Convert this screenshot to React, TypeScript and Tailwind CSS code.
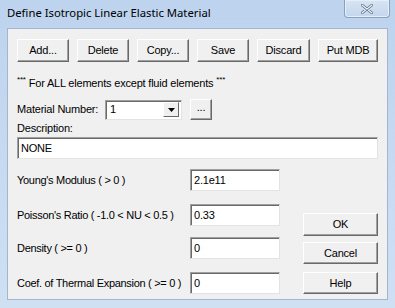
import React from "react";

const font = { fontFamily: '"Liberation Sans", Arial, sans-serif' };

function Btn({ label, w, h = 23, className = "" }: { label: string; w: number; h?: number; className?: string }) {
  return (
    <div
      className={`flex items-center justify-center bg-[#f0f0f0] border border-t-white border-l-white border-r-[#696969] border-b-[#696969] shadow-[inset_-1px_-1px_0_#a0a0a0] text-[11px] text-black ${className}`}
      style={{ width: w, height: h }}
    >
      {label}
    </div>
  );
}

function Field({ value, w, className = "" }: { value: string; w: number; className?: string }) {
  return (
    <div
      className={`flex items-center h-[22px] bg-white border border-t-[#a0a0a0] border-l-[#a0a0a0] border-r-[#e3e3e3] border-b-[#e3e3e3] shadow-[inset_1px_1px_0_#696969] pl-[3px] text-[11px] text-black ${className}`}
      style={{ width: w }}
    >
      {value}
    </div>
  );
}

const rows = [
  { label: "Young's Modulus ( > 0 )", value: "2.1e11", mt: "mt-0" },
  { label: "Poisson's Ratio ( -1.0 < NU < 0.5 )", value: "0.33", mt: "mt-[13px]" },
  { label: "Density ( >= 0 )", value: "0", mt: "mt-[11px]" },
  { label: "Coef. of Thermal Expansion ( >= 0 )", value: "0", mt: "mt-[13px]" },
];

export default function App() {
  return (
    <div
      className="w-[395px] h-[308px] flex flex-col bg-gradient-to-b from-[#bdd3ee] to-[#cfe0f3] overflow-hidden"
      style={font}
    >
      {/* title bar */}
      <div className="h-[28px] flex justify-between shrink-0">
        <div
          className="pl-[7px] pt-[5px] text-[11.3px] text-black whitespace-nowrap"
          style={{ fontFamily: '"Noto Sans", "Open Sans", sans-serif' }}
        >
          Define Isotropic Linear Elastic Material
        </div>
        <div className="mr-[5px] w-[46px] h-[18px] rounded-b-[4px] border border-t-0 border-[#8aa1bd] bg-gradient-to-b from-[#d7e4f3] to-[#c4d6ec] shadow-[inset_0_0_0_1px_#e6eef8] flex items-center justify-center">
          <svg width="12" height="10" viewBox="0 0 12 10">
            <path d="M1 1 L11 9 M11 1 L1 9" stroke="#52677f" strokeWidth="2.6" strokeLinecap="round" />
            <path d="M1 1 L11 9 M11 1 L1 9" stroke="#f4f8fc" strokeWidth="1.2" strokeLinecap="round" />
          </svg>
        </div>
      </div>

      {/* client area */}
      <div className="mx-[7px] h-[272px] shrink-0 bg-[#f0f0f0] border border-[#a3b6cd] pl-[9px] flex flex-col tracking-[-0.2px]">
        {/* action buttons */}
        <div className="flex gap-[8px] mt-[10px]">
          <Btn label="Add..." w={52} />
          <Btn label="Delete" w={52} />
          <Btn label="Copy..." w={52} />
          <Btn label="Save" w={52} />
          <Btn label="Discard" w={53} />
          <Btn label="Put MDB" w={60} />
        </div>

        <div className="mt-[13px] h-[16px] flex items-center text-[11px] text-black whitespace-nowrap">
          <span className="text-[8px] relative -top-[3px] mr-[3px]">***</span>
          For ALL elements except fluid elements
          <span className="text-[8px] relative -top-[3px] ml-[3px]">***</span>
        </div>

        {/* material number */}
        <div className="mt-[8px] h-[21px] flex items-center text-[11px] text-black">
          <span className="w-[88px] whitespace-nowrap">Material Number:</span>
          <div className="w-[77px] h-[20px] bg-white border border-t-[#a0a0a0] border-l-[#a0a0a0] border-r-[#e3e3e3] border-b-[#e3e3e3] shadow-[inset_1px_1px_0_#696969] flex items-center justify-between pl-[4px] pr-[2px]">
            <span>1</span>
            <div className="w-[16px] h-[15px] bg-[#f0f0f0] border border-t-white border-l-white border-r-[#696969] border-b-[#696969] flex items-center justify-center">
              <svg width="7" height="4" viewBox="0 0 7 4">
                <path d="M0 0 H7 L3.5 4 Z" fill="#000" />
              </svg>
            </div>
          </div>
          <Btn label="..." w={22} h={21} className="ml-[8px] pb-[4px]" />
        </div>

        <div className="mt-[1px] h-[14px] flex items-center text-[11px] text-black">Description:</div>
        <Field value="NONE" w={361} className="mt-[2px]" />

        {/* properties */}
        <div className="mt-[10px] flex">
          <div className="flex flex-col">
            {rows.map((r) => (
              <div key={r.label} className={`flex items-center h-[22px] ${r.mt}`}>
                <span className="w-[173px] shrink-0 text-[11px] text-black whitespace-nowrap tracking-[-0.3px]">{r.label}</span>
                <Field value={r.value} w={90} />
              </div>
            ))}
          </div>
          <div className="ml-[23px] flex flex-col">
            <Btn label="OK" w={75} className="mt-[44px]" />
            <Btn label="Cancel" w={75} h={22} className="mt-[6px]" />
            <Btn label="Help" w={75} h={22} className="mt-[8px]" />
          </div>
        </div>
      </div>
    </div>
  );
}
